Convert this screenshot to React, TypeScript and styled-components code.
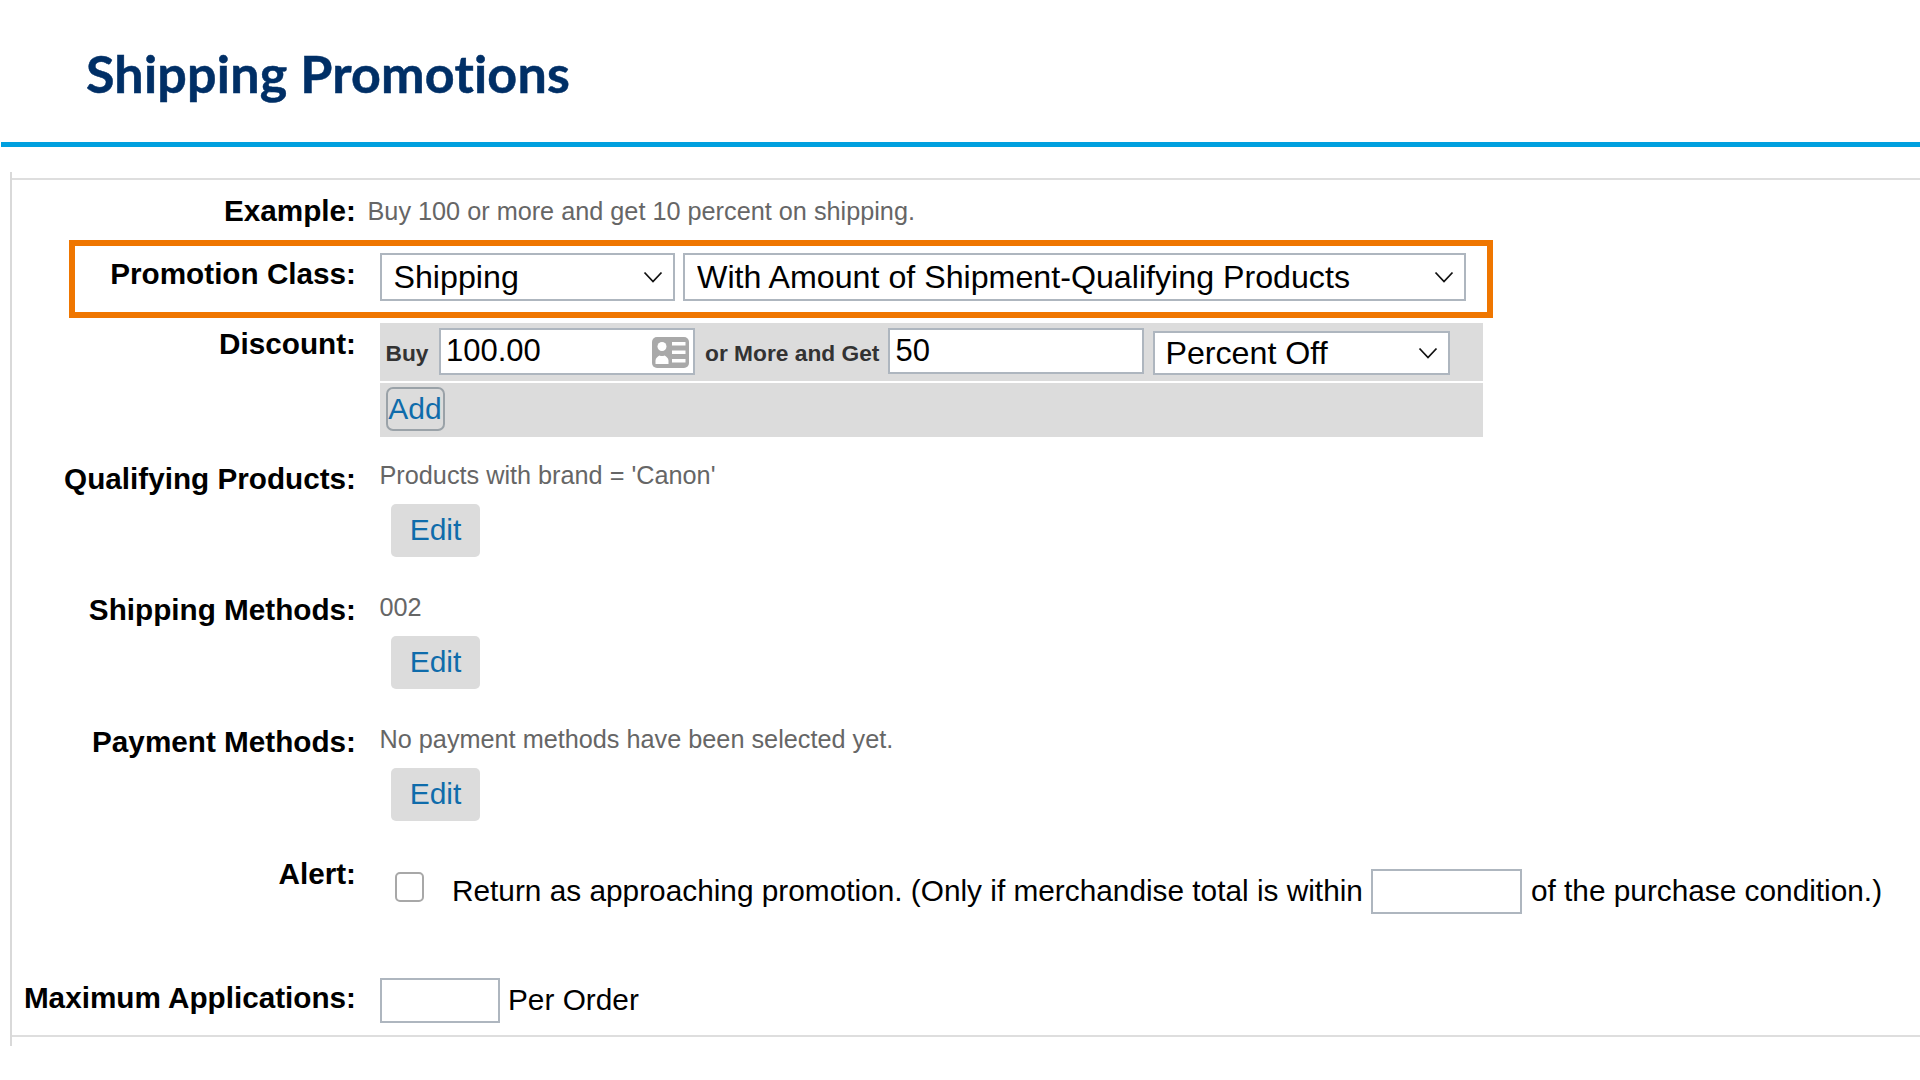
import React from "react";
import styled, { createGlobalStyle } from "styled-components";

const Global = createGlobalStyle`
  html, body { margin: 0; padding: 0; background: #fff; }
  body { font-family: "Liberation Sans", Arial, sans-serif; color: #000; }
  * { box-sizing: border-box; }
`;

const Page = styled.div`
  width: 1920px;
  height: 1080px;
  overflow: hidden;
  background: #fff;
`;

const Header = styled.header`
  height: 142px;
  padding: 42px 0 0 86px;
`;

const Title = styled.h1`
  margin: 0;
  font-family: Lato, "Noto Sans", sans-serif;
  font-weight: 700;
  font-size: 52px;
  line-height: 62px;
  letter-spacing: 0.2px;
  font-variant-ligatures: none;
  color: #002f66;
  -webkit-text-stroke: 0.5px #002f66;
`;

const BlueRule = styled.div`
  height: 5px;
  margin-left: 1px;
  background: #00a0df;
`;

const Frame = styled.div`
  height: 874px;
  margin: 25px 0 0 10px;
  padding: 6px 0 8px;
  border-left: 2px solid #d9d9d9;
`;

const Form = styled.div`
  height: 859px;
  border-top: 2px solid #dedede;
  border-bottom: 2px solid #dedede;
  display: flex;
  flex-direction: column;
`;

const Row = styled.div<{ $top: number }>`
  display: grid;
  grid-template-columns: 344px 1fr;
  column-gap: 23.5px;
  align-items: start;
  margin-top: ${(p) => p.$top}px;
`;

const Label = styled.div<{ $offset?: number }>`
  padding-top: ${(p) => p.$offset ?? 0}px;
  text-align: right;
  font-weight: 700;
  font-size: 29.7px;
  line-height: 34px;
  white-space: nowrap;
`;

const Highlight = styled.div`
  display: grid;
  grid-template-columns: 281px 1fr;
  column-gap: 23.5px;
  align-items: start;
  width: 1424px;
  height: 78px;
  margin: 12px 0 0 57px;
  padding-top: 7px;
  border: 6px solid #ef7600;
`;

const HighlightLabel = styled(Label)`
  margin-top: 4px;
`;

const Value = styled.div`
  font-size: 25.25px;
  line-height: 34px;
  color: #666;
  white-space: nowrap;
`;

const ExampleValue = styled(Value)`
  margin-left: -12px;
`;

const Selects = styled.div`
  display: flex;
  gap: 8px;
`;

const SelectWrap = styled.div<{ $w: number; $h: number }>`
  position: relative;
  width: ${(p) => p.$w}px;
  height: ${(p) => p.$h}px;
  flex: none;
`;

const Select = styled.select<{ $pad?: number }>`
  appearance: none;
  display: block;
  width: 100%;
  height: 100%;
  padding: 0 40px 0 ${(p) => p.$pad ?? 12}px;
  border: 2px solid #aeb6bf;
  border-radius: 0;
  background: #fff;
  color: #000;
  font-family: inherit;
  font-size: 32.2px;
`;

const Chevron = styled.svg`
  position: absolute;
  top: 50%;
  right: 12px;
  width: 20px;
  height: 12px;
  margin-top: -6px;
  pointer-events: none;
`;

const Panel = styled.div`
  width: 1103.5px;
  height: 114px;
  background: #dcdcdc;
  margin-top: 5px;
`;

const PanelTop = styled.div`
  display: flex;
  align-items: flex-start;
  height: 60px;
  padding: 5px 0 0 6px;
  border-bottom: 2px solid #fff;
`;

const PanelBottom = styled.div`
  padding: 4px 0 0 6px;
`;

const Small = styled.span<{ $ml: number; $mr: number }>`
  margin: 0 ${(p) => p.$mr}px 0 ${(p) => p.$ml}px;
  font-weight: 700;
  font-size: 22.75px;
  line-height: 50px;
  color: #333;
  white-space: nowrap;
`;

const InputWrap = styled.div`
  position: relative;
  flex: none;
`;

const TextInput = styled.input<{ $w: number; $h: number }>`
  display: block;
  width: ${(p) => p.$w}px;
  height: ${(p) => p.$h}px;
  flex: none;
  padding: 0 5px 1px;
  border: 2px solid #aeb6bf;
  border-radius: 0;
  background: #fff;
  color: #000;
  font-family: inherit;
  font-size: 31px;
  outline: none;
`;

const CardIcon = styled.svg`
  position: absolute;
  top: 9px;
  right: 6px;
  width: 37px;
  height: 31px;
`;

const Percent = styled(SelectWrap)`
  margin: 3px 0 0 9px;
`;

const AddButton = styled.button`
  display: block;
  width: 59px;
  height: 44px;
  padding: 0 0 1px;
  border: 2px solid #9aa2a8;
  border-radius: 7px;
  background: #dcdcdc;
  color: #0f6cab;
  font-family: inherit;
  font-size: 30px;
`;

const EditButton = styled.button`
  display: block;
  width: 89px;
  height: 53px;
  margin: 12px 0 0 11px;
  padding: 0 0 1px 1px;
  border: none;
  border-radius: 5px;
  background: #dcdcdc;
  color: #0f6cab;
  font-family: inherit;
  font-size: 30px;
`;

const Line = styled.div<{ $pt?: number }>`
  display: flex;
  align-items: center;
  padding-top: ${(p) => p.$pt ?? 0}px;
  font-size: 29.8px;
  white-space: nowrap;
`;

const LineText = styled.span`
  padding-bottom: 2px;
`;

const Check = styled.input`
  appearance: none;
  flex: none;
  width: 29px;
  height: 30px;
  margin: 0 28px 9px 15.5px;
  border: 2px solid #a8a8a8;
  border-radius: 5px;
  background: #fff;
`;

const Gap = styled.span`
  width: 8.5px;
  flex: none;
`;

const Arrow = () => (
  <Chevron viewBox="0 0 20 12">
    <path d="M1.5 1.5 10 10.5 18.5 1.5" fill="none" stroke="#111" strokeWidth="1.8" />
  </Chevron>
);

const Edit = () => <EditButton type="button">Edit</EditButton>;

export default function App() {
  return (
    <Page>
      <Global />
      <Header>
        <Title>Shipping Promotions</Title>
      </Header>
      <BlueRule />
      <Frame>
        <Form>
          <Row $top={14}>
            <Label>Example:</Label>
            <ExampleValue>Buy 100 or more and get 10 percent on shipping.</ExampleValue>
          </Row>

          <Highlight>
            <HighlightLabel>Promotion Class:</HighlightLabel>
            <Selects>
              <SelectWrap $w={295.5} $h={48}>
                <Select defaultValue="Shipping">
                  <option>Shipping</option>
                </Select>
                <Arrow />
              </SelectWrap>
              <SelectWrap $w={783} $h={48}>
                <Select defaultValue="With Amount of Shipment-Qualifying Products">
                  <option>With Amount of Shipment-Qualifying Products</option>
                </Select>
                <Arrow />
              </SelectWrap>
            </Selects>
          </Highlight>

          <Row $top={0}>
            <Label $offset={9}>Discount:</Label>
            <Panel>
              <PanelTop>
                <Small $ml={0} $mr={10.5}>Buy</Small>
                <InputWrap>
                  <TextInput $w={256} $h={47} defaultValue="100.00" />
                  <CardIcon viewBox="0 0 37 31">
                    <rect x="0" y="0" width="37" height="31" rx="5" fill="#a9a9a9" />
                    <circle cx="10" cy="9.500" r="4.500" fill="#fff" />
                    <path d="M3.500 27v-3.500c0-2.500 2.500-4 4-5 1.500.8 3.500.8 5 0 1.500 1 4 2.500 4 5V27z" fill="#fff" />
                    <rect x="20" y="5" width="13.500" height="3.500" fill="#fff" />
                    <rect x="20" y="13.500" width="13.500" height="3.500" fill="#fff" />
                    <rect x="20" y="22" width="13.500" height="3.500" fill="#fff" />
                  </CardIcon>
                </InputWrap>
                <Small $ml={10} $mr={9}>or More and Get</Small>
                <TextInput $w={256} $h={46} defaultValue="50" />
                <Percent $w={297} $h={44}>
                  <Select $pad={10} defaultValue="Percent Off">
                    <option>Percent Off</option>
                  </Select>
                  <Arrow />
                </Percent>
              </PanelTop>
              <PanelBottom>
                <AddButton type="button">Add</AddButton>
              </PanelBottom>
            </Panel>
          </Row>

          <Row $top={21}>
            <Label $offset={4}>Qualifying Products:</Label>
            <div>
              <Value>Products with brand = 'Canon'</Value>
              <Edit />
            </div>
          </Row>

          <Row $top={33}>
            <Label $offset={3}>Shipping Methods:</Label>
            <div>
              <Value>002</Value>
              <Edit />
            </div>
          </Row>

          <Row $top={32.5}>
            <Label $offset={3.5}>Payment Methods:</Label>
            <div>
              <Value>No payment methods have been selected yet.</Value>
              <Edit />
            </div>
          </Row>

          <Row $top={36.5}>
            <Label>Alert:</Label>
            <Line $pt={12}>
              <Check type="checkbox" />
              <LineText>Return as approaching promotion. (Only if merchandise total is within</LineText>
              <Gap />
              <TextInput $w={151} $h={45} />
              <Gap />
              <LineText>of the purchase condition.)</LineText>
            </Line>
          </Row>

          <Row $top={64}>
            <Label $offset={3}>Maximum Applications:</Label>
            <Line>
              <TextInput $w={120} $h={45} />
              <Gap />
              <LineText>Per Order</LineText>
            </Line>
          </Row>
        </Form>
      </Frame>
    </Page>
  );
}
